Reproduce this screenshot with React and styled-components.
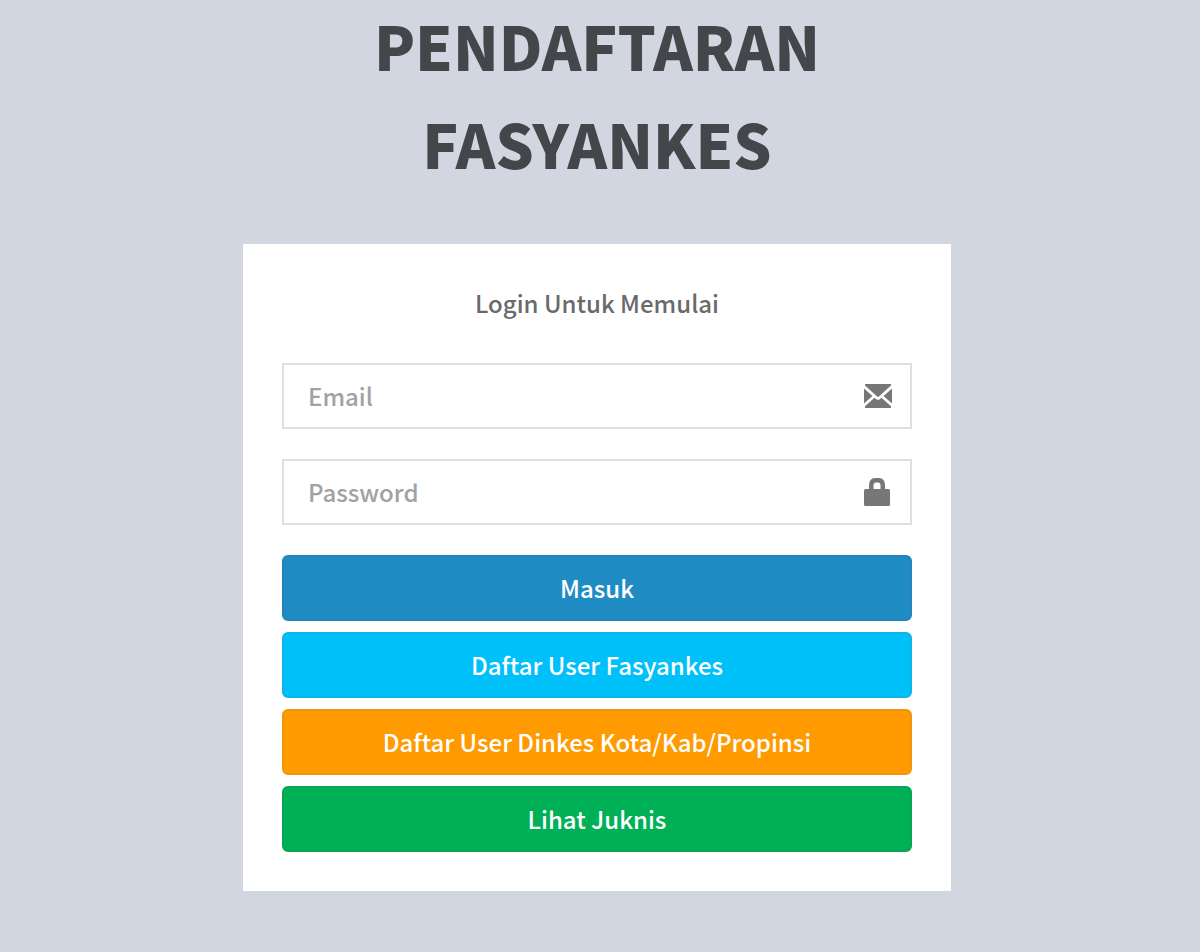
import React from 'react';
import styled, { createGlobalStyle } from 'styled-components';


const GlobalStyle = createGlobalStyle`
    * {
        box-sizing: border-box;
    }
    body {
        margin: 0;
        background: #d2d6e0;
        color: #444649;
        font-family: "Noto Sans CJK SC", "Noto Sans", sans-serif;
        font-size: 24px;
        font-weight: 500;
        line-height: 34px;
    }
`

const Page = styled.main`
    display: flex;
    flex-direction: column;
    align-items: center;
    padding: 0 6px 60px 0;
`

const Title = styled.h1`
    width: 100%;
    max-width: 708px;
    margin: -4px 0 52px;
    font-size: 60px;
    font-weight: 900;
    line-height: 98px;
    text-align: center;
`

const Card = styled.form`
    display: flex;
    flex-direction: column;
    width: 100%;
    max-width: 708px;
    padding: 42px 39px 39px;
    background: #fff;
`

const Message = styled.p`
    margin: 0 0 43px;
    color: #6a6a6a;
    text-align: center;
`

const Field = styled.label`
    display: flex;
    align-items: center;
    height: 66px;
    margin-bottom: 30px;
    padding: 0 18px 0 24px;
    border: 2px solid #dedfe1;
    color: #777;
`

const Input = styled.input`
    flex: 1;
    min-width: 0;
    padding: 0;
    border: 0;
    outline: 0;
    background: transparent;
    color: #555;
    font: inherit;

    &::placeholder {
        color: #a2a2a2;
        opacity: 1;
    }
`

const Actions = styled.div`
    display: flex;
    flex-direction: column;
    gap: 11px;
`

const Button = styled.button`
    display: flex;
    align-items: center;
    justify-content: center;
    height: 66px;
    padding: 0 24px;
    border: 2px solid ${props=>props.$border};
    border-radius: 6px;
    background: ${props=>props.$bg};
    color: #fff;
    font: inherit;
    text-decoration: none;
    cursor: pointer;
`

const EnvelopeIcon = ()=>(
    <svg width="28" height="24" viewBox="0 0 28 24" fill="currentColor" aria-hidden="true">
        <path d="M1 0h26v1.500L15.200 12.200q-1.200 1-2.400 0L1 1.500z"/>
        <path d="M0 4.500L8.500 12 0 19.500z"/>
        <path d="M28 4.500L19.500 12l8.500 7.500z"/>
        <path d="M10.500 13.700l1.700 1.500q1.800 1.300 3.600 0l1.700-1.500L27 22.300V24H1v-1.700z"/>
    </svg>
)

const LockIcon = ()=>(
    <svg width="28" height="28" viewBox="0 0 28 28" fill="currentColor" aria-hidden="true">
        <path fillRule="evenodd" d="M5 11V7.500Q5 0 11 0h4q6 0 6 7.500V11h3.500q1.500 0 1.500 1.500v14q0 1.500-1.500 1.500h-23Q0 28 0 26.500v-14Q0 11 1.500 11zm4.500 0h7V7.500q0-3-2.500-3h-2q-2.500 0-2.500 3z"/>
    </svg>
)

const links = [
    {
        title:'Daftar User Fasyankes',
        bg:'#00c0fa',
        border:'#0ab5e8'
    },
    {
        title:'Daftar User Dinkes Kota/Kab/Propinsi',
        bg:'#ff9b00',
        border:'#f09608'
    },
    {
        title:'Lihat Juknis',
        bg:'#00b056',
        border:'#08a552'
    }
]

const App = ()=>{
    return(
    <>
        <GlobalStyle/>
        <Page>
            <Title>PENDAFTARAN FASYANKES</Title>
            <Card onSubmit={e=>e.preventDefault()}>
                <Message>Login Untuk Memulai</Message>
                <Field>
                    <Input type="email" name="email" placeholder="Email" aria-label="Email"/>
                    <EnvelopeIcon/>
                </Field>
                <Field>
                    <Input type="password" name="password" placeholder="Password" aria-label="Password"/>
                    <LockIcon/>
                </Field>
                <Actions>
                    <Button type="submit" $bg="#1f8cc4" $border="#2284b8">Masuk</Button>
                    {
                        links.map(link=><Button as="a" href="#" key={link.title} $bg={link.bg} $border={link.border}>
                            {link.title}
                        </Button>)
                    }
                </Actions>
            </Card>
        </Page>
    </>
    )
}


export default App;
